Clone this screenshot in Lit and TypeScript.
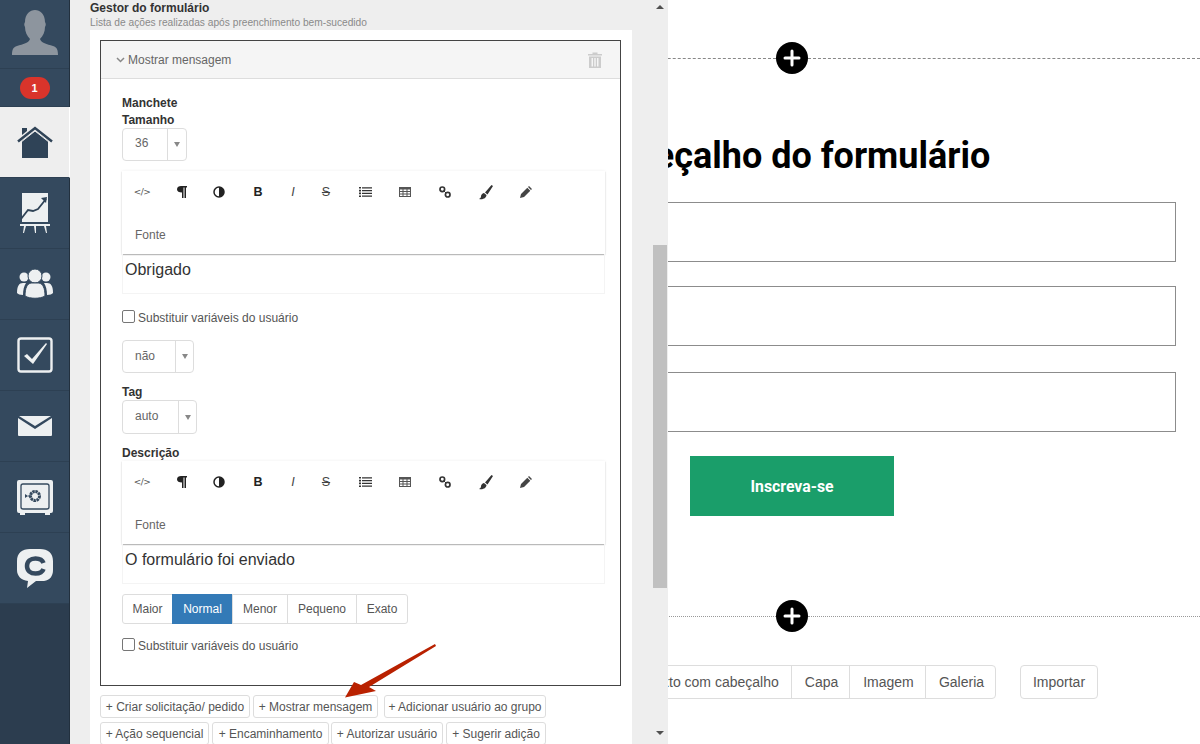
import { LitElement, html, css, svg } from "lit";
import { customElement } from "lit/decorators.js";

const sideIcons = {
  avatar: svg`<svg width="48" height="46" viewBox="0 0 48 46"><path fill="#8d959e" d="M1 46c0-5 1-8 5-9 6-2 12-3 13-7-3-3-5-7-5-12-1-2-1-3 0-5 0-8 5-12 10-12s10 4 10 12c1 2 1 3 0 5 0 5-2 9-5 12 1 4 7 5 13 7 4 1 5 4 5 9z"/></svg>`,
  home: svg`<svg width="36" height="33" viewBox="0 0 36 33"><path fill="#2f4357" d="M5 32V15L18 5l13 10v17z"/><path fill="none" stroke="#2f4357" stroke-width="2.500" d="M1 15.500 18 2l17 13.500"/><path fill="#2f4357" d="M5 2h5v3L5 9z"/><path fill="none" stroke="#eeeeee" stroke-width="1" d="M3.500 16.500 18 5l14.500 11.500"/></svg>`,
  chart: svg`<svg width="30" height="40" viewBox="0 0 30 40"><path fill="#edf0f1" d="M2 0h26v29H2z"/><path fill="none" stroke="#2f4357" stroke-width="1.800" d="M1 26 8 17l5 1 5-2 8-10"/><path fill="#2f4357" d="M21 5l6-1-1 6z"/><path fill="#edf0f1" d="M0 31h30v2H0zM4 33h2l-2 7H3zM14 33h2v7h-1zM24 33h2l1 7h-1z"/></svg>`,
  people: svg`<svg width="36" height="30" viewBox="0 0 36 30"><g fill="#edf0f1"><circle cx="7" cy="8" r="4.500"/><circle cx="29" cy="8" r="4.500"/><path d="M0 24c0-7 2-10 6-10h3c-2 3-3 7-3 12-3 0-5-1-6-2zM36 24c0-7-2-10-6-10h-3c2 3 3 7 3 12 3 0 5-1 6-2z"/><circle cx="18" cy="7" r="7" stroke="#34495e"/><path d="M8 27c0-8 2-12 6-13h8c4 1 6 5 6 13-5 3-15 3-20 0z" stroke="#34495e"/></g></svg>`,
  check: svg`<svg width="36" height="36" viewBox="0 0 36 36"><rect x="1.500" y="1.500" width="33" height="33" rx="2.500" fill="none" stroke="#edf0f1" stroke-width="2.400"/><path fill="#edf0f1" d="M7 19l3-2 5 5L29 6l1 1-14 20z"/></svg>`,
  mail: svg`<svg width="34" height="20" viewBox="0 0 34 20"><path fill="#edf0f1" d="M1 0h32L17 10zM0 2l17 11L34 2v17a1 1 0 0 1-1 1H1a1 1 0 0 1-1-1z"/></svg>`,
  safe: svg`<svg width="36" height="35" viewBox="0 0 36 35"><path fill="#edf0f1" d="M2 0h32a2 2 0 0 1 2 2v29a2 2 0 0 1-2 2h-1v2h-5v-2H8v2H3v-2H2a2 2 0 0 1-2-2V2a2 2 0 0 1 2-2z"/><rect x="4" y="4" width="28" height="25" rx="2" fill="none" stroke="#34495e" stroke-width="1.300"/><circle cx="18" cy="16" r="4.500" fill="none" stroke="#34495e" stroke-width="3" stroke-dasharray="2.400 .6"/><path fill="#34495e" d="M8 14v4l3-2zM11 15.500h3v1h-3z"/></svg>`,
  chat: svg`<svg width="36" height="39" viewBox="0 0 36 39"><path fill="#edf0f1" d="M13 0h10c8 0 13 4 13 12v9c0 6-3 10-9 11l-8 0-9 7 1-7C4 31 0 27 0 21v-9C0 4 5 0 13 0z"/><path fill="none" stroke="#34495e" stroke-width="4.500" d="M26.500 14c-1-3-4-4.500-8-4.500-5 0-8.500 3-8.500 7.500s3.500 7.500 8.500 7.500c4 0 7-1.500 8-4.500"/></svg>`,
};

const tools = [
  html`<span class="code">&lt;/&gt;</span>`,
  svg`<svg width="10" height="12" viewBox="0 0 10 12"><path fill="#222" d="M4 0h6v1.500H9V12H7.500V1.500H6.500V12H5V6.500C2 6.500 0 5.500 0 3.300 0 1 2 0 4 0z"/></svg>`,
  svg`<svg width="12" height="12" viewBox="0 0 12 12"><circle cx="6" cy="6" r="5" fill="#fff" stroke="#222" stroke-width="1.500"/><path fill="#222" d="M6 1a5 5 0 0 1 0 10z"/></svg>`,
  html`<b class="glyph">B</b>`,
  html`<i class="glyph thin">I</i>`,
  html`<s class="glyph thin">S</s>`,
  svg`<svg width="13" height="10" viewBox="0 0 13 10"><path fill="#333" d="M0 0h2v1.600H0zM3 .2h10v1.200H3zM0 2.800h2v1.600H0zM3 3h10v1.200H3zM0 5.600h2v1.600H0zM3 5.800h10V7H3zM0 8.400h2V10H0zM3 8.600h10v1.200H3z"/></svg>`,
  svg`<svg width="12" height="10" viewBox="0 0 12 10"><path fill="#555" fill-rule="evenodd" d="M0 0h12v10H0zM1 2.500v1.500h2.500V2.500zM4.500 2.500v1.500h3V2.500zM8.500 2.500v1.500H11V2.500zM1 5v1.500h2.500V5zM4.500 5v1.500h3V5zM8.500 5v1.500H11V5zM1 7.500V9h2.500V7.500zM4.500 7.500V9h3V7.500zM8.500 7.500V9H11V7.500z"/></svg>`,
  svg`<svg width="12" height="12" viewBox="0 0 12 12"><g fill="none" stroke="#333" stroke-width="1.700"><circle cx="3.300" cy="3.300" r="2.300"/><circle cx="8.700" cy="8.700" r="2.300"/></g><path stroke="#333" d="M5 5l2 2"/></svg>`,
  svg`<svg width="14" height="15" viewBox="0 0 14 15"><path fill="#333" d="M12.500 0l1.500 1-5.500 8.500-2.500-2zM5 8l2.500 2c0 2.500-3 5-7.500 4 2-1 2-2 2-3 0-1.500 2-3 3-3z"/></svg>`,
  svg`<svg width="12" height="12" viewBox="0 0 12 12"><path fill="#444" d="M9 0l3 3-1 1-3-3zM7.300 1.700l3 3L4 11l-4 1 1-4z"/></svg>`,
];

const toolbar = () => html`
  <div class="toolbar">
    <div class="tools">${tools.map((t) => html`<span class="tool">${t}</span>`)}</div>
    <div class="fonte">Fonte</div>
  </div>`;

const caret = html`<span class="caret"></span>`;

@customElement("app-root")
export class AppRoot extends LitElement {
  static styles = css`
    :host { display: block; width: 1200px; height: 744px; overflow: hidden; font-family: "Liberation Sans", Arial, sans-serif; color: #333; background: #fff; }
    .page { display: flex; height: 744px; }
    .side { width: 70px; flex: none; background: #2c3d4f; border-right: 1px solid #22303e; box-sizing: border-box; }
    .s-item { height: 71px; display: flex; align-items: center; justify-content: center; background: #34495e; border-bottom: 1px solid #2d4053; box-sizing: border-box; }
    .s-item.avatar { height: 69px; align-items: flex-end; padding-bottom: 13px; }
    .s-item.badge { height: 38px; }
    .s-item.active { background: #eeeeee; border-right: 1px solid #fff; margin-right: -1px; height: 71px; border-bottom: 1px solid #2d4053; }
    .pill { width: 30px; height: 22px; border-radius: 11px; background: #d9342b; color: #fff; font-size: 11px; font-weight: 700; display: flex; align-items: center; justify-content: center; }

    .panel { width: 598px; flex: none; background: #eeeeee; display: flex; position: relative; z-index: 2; height: 744px; overflow: hidden; }
    .content { width: 582px; flex: none; padding-left: 20px; box-sizing: border-box; }
    .title { font-size: 12px; font-weight: 700; line-height: 15px; color: #333; height: 15px; padding-top: 1px; margin-bottom: -1px; }
    .sub { font-size: 10.200px; line-height: 15px; color: #8a8a8a; height: 15px; }
    .sheet { background: #fff; width: 542px; padding: 10px 0 0 10px; box-sizing: border-box; height: 714px; }
    .box { width: 521px; height: 646px; border: 1px solid #444; box-sizing: border-box; }
    .box-head { height: 38px; background: #f5f5f5; border-bottom: 1px solid #ddd; box-sizing: border-box; display: flex; align-items: center; padding: 0 18px 0 15px; font-size: 12px; color: #666; gap: 3px; }
    .box-head .trash { margin-left: auto; }
    .box-body { padding: 16px 15px 0 21px; }
    .lbl { font-size: 12px; font-weight: 700; line-height: 16px; color: #333; }
    .lbl.tam { position: relative; top: 1px; }
    .select { display: flex; width: max-content; height: 33px; border: 1px solid #ddd; border-radius: 4px; box-sizing: border-box; font-size: 12px; color: #666; }
    .select .val { display: flex; align-items: center; padding-left: 12px; box-sizing: border-box; height: 30px; }
    .select .arr { border-left: 1px solid #ddd; display: flex; align-items: center; justify-content: center; flex: 1; }
    .caret { width: 0; height: 0; border-left: 3px solid transparent; border-right: 3px solid transparent; border-top: 5px solid #888; }
    .w36 .val { width: 44px; height: 28px; } .w36 { width: 65px; margin-top: 1px; }
    .wnao .val { width: 52px; } .wnao { width: 72px; margin-top: 13px; }
    .wauto .val { width: 55px; } .wauto { width: 75px; height: 34px; }
    .toolbar { width: 483px; height: 83px; background: #fff; box-shadow: 0 1px 1px rgba(0,0,0,.25), 0 0 3px rgba(0,0,0,.07); box-sizing: border-box; }
    .t1 { margin-top: 10px; }
    .tools { display: grid; grid-template-columns: 40px 40px 34px 44px 26px 40px 38px 42px 38px 44px 36px; height: 42px; }
    .tool { display: flex; align-items: center; justify-content: center; }
    .code { font-size: 9px; color: #555; font-family: "DejaVu Sans", sans-serif; letter-spacing: -.5px; }
    .glyph { font-size: 12.500px; color: #222; }
    .glyph.thin { color: #444; font-weight: 400; }
    .fonte { font-size: 12px; color: #666; padding: 15px 0 0 14px; line-height: 14px; margin-left: -1px; }
    .area { width: 483px; height: 40px; box-sizing: border-box; border: 1px solid #f4f4f4; border-top: 0; font-size: 16px; color: #333; padding: 6px 0 0 2px; line-height: 20px; }
    .check { display: flex; align-items: center; height: 18px; font-size: 12px; color: #555; gap: 3px; margin-top: 15px; }
    .check .cb { width: 13px; height: 13px; box-sizing: border-box; border: 1px solid #767676; border-radius: 2px; background: #fff; margin-top: -3px; }
    .tag { margin-top: 11px; position: relative; top: 0; }
    .desc { margin-top: 11px; }
    .group { display: flex; margin-top: 10px; width: max-content; }
    .group span { height: 30px; box-sizing: border-box; border: 1px solid #ddd; margin-left: -1px; display: flex; align-items: center; justify-content: center; font-size: 12px; color: #555; background: #fff; }
    .group span:first-child { margin-left: 0; border-radius: 3px 0 0 3px; width: 51px; }
    .group span:nth-child(2) { width: 61px; background: #337ab7; border-color: #337ab7; color: #fff; }
    .group span:nth-child(3) { width: 56px; }
    .group span:nth-child(4) { width: 70px; }
    .group span:nth-child(5) { width: 52px; border-radius: 0 3px 3px 0; }
    .check.c2 { margin-top: 13px; }
    .actions { margin-top: 9px; display: flex; flex-direction: column; gap: 4px; }
    .arow { display: flex; }
    .act { height: 23px; box-sizing: border-box; border: 1px solid #ddd; border-radius: 3px; font-size: 12px; color: #555; display: flex; align-items: center; justify-content: center; background: #fff; white-space: nowrap; flex: none; }

    .sbar { width: 16px; flex: none; display: flex; flex-direction: column; align-items: stretch; height: 744px; }
    .sup { height: 245px; display: flex; justify-content: center; padding-top: 5px; box-sizing: border-box; }
    .thumb { height: 343px; background: #c0c0c0; margin-left: 1px; width: 14px; }
    .sdn { flex: 1; display: flex; justify-content: center; align-items: flex-end; padding-bottom: 9px; }
    .up { width: 0; height: 0; border-left: 4px solid transparent; border-right: 4px solid transparent; border-bottom: 4px solid #505050; }
    .dn { width: 0; height: 0; border-left: 4px solid transparent; border-right: 4px solid transparent; border-top: 4px solid #505050; }

    .main { flex: 1; overflow: hidden; position: relative; }
    .inner { width: 793px; margin-left: -261px; padding-top: 42px; }
    .sep { display: grid; grid-template-columns: 369px 32px 1fr; align-items: center; height: 32px; }
    .sep .l { border-top: 1px dashed #888; }
    .sep.dot .l { border-top: 1px dotted #999; }
    .plus { width: 32px; height: 32px; border-radius: 50%; background: #000; display: flex; align-items: center; justify-content: center; }
    h1 { margin: 0; width: 768px; text-align: center; font-family: Roboto, sans-serif; font-size: 36px; font-weight: 700; line-height: 44px; color: #000; padding-top: 60px; white-space: nowrap; }
    .field { width: 769px; height: 60px; box-sizing: border-box; border: 1px solid #8c8c8c; }
    .f1 { margin-top: 24px; } .f2 { margin-top: 24px; } .f3 { margin-top: 26px; }
    .cta { margin: 24px 0 0 283px; width: 204px; height: 60px; background: #1a9e6a; color: #fff; font-family: Roboto, sans-serif; font-weight: 700; font-size: 15.800px; display: flex; align-items: center; justify-content: center; }
    .sep.s2 { margin-top: 84px; }
    .blocks { display: flex; justify-content: flex-end; padding-right: 102px; margin-top: 33px; gap: 24px; }
    .bgroup { display: flex; }
    .bgroup span, .imp { height: 34px; box-sizing: border-box; border: 1px solid #ddd; display: flex; align-items: center; justify-content: center; font-size: 14px; color: #555; margin-left: -1px; background: #fff; }
    .bgroup span { padding-left: 2px; }
    .bgroup span:first-child { width: 160px; }
    .bgroup span:nth-child(2) { width: 59px; }
    .bgroup span:nth-child(3) { width: 77px; }
    .bgroup span:nth-child(4) { width: 71px; border-radius: 0 4px 4px 0; }
    .imp { width: 78px; border-radius: 4px; margin-left: 0; }

    .arrow { position: absolute; left: 340px; top: 640px; z-index: 3; }
  `;

  private sep(cls: string) {
    return html`<div class="sep ${cls}"><div class="l"></div><div class="plus"><svg width="18" height="18" viewBox="0 0 18 18"><path stroke="#fff" stroke-width="3" stroke-linecap="round" d="M9 2v14M2 9h14"/></svg></div><div class="l"></div></div>`;
  }

  render() {
    const acts1: [string, number, number][] = [["+ Criar solicitação/ pedido", 150, 0], ["+ Mostrar mensagem", 125, 3], ["+ Adicionar usuário ao grupo", 162, 6]];
    const acts2: [string, number, number][] = [["+ Ação sequencial", 109, 0], ["+ Encaminhamento", 117, 3], ["+ Autorizar usuário", 112, 2], ["+ Sugerir adição", 100, 3]];
    const act = (a: [string, number, number]) => html`<span class="act" style="width:${a[1]}px;margin-left:${a[2]}px">${a[0]}</span>`;
    return html`
      <div class="page">
        <nav class="side">
          <div class="s-item avatar">${sideIcons.avatar}</div>
          <div class="s-item badge"><span class="pill">1</span></div>
          <div class="s-item active">${sideIcons.home}</div>
          <div class="s-item">${sideIcons.chart}</div>
          <div class="s-item">${sideIcons.people}</div>
          <div class="s-item">${sideIcons.check}</div>
          <div class="s-item">${sideIcons.mail}</div>
          <div class="s-item">${sideIcons.safe}</div>
          <div class="s-item">${sideIcons.chat}</div>
        </nav>
        <section class="panel">
          <div class="content">
            <div class="title">Gestor do formulário</div>
            <div class="sub">Lista de ações realizadas após preenchimento bem-sucedido</div>
            <div class="sheet">
              <div class="box">
                <div class="box-head">
                  <svg width="9" height="6" viewBox="0 0 9 6"><path fill="none" stroke="#888" stroke-width="1.500" d="M1 1l3.500 3.500L8 1"/></svg>
                  <span>Mostrar mensagem</span>
                  <svg class="trash" width="14" height="16" viewBox="0 0 14 16"><path fill="#ccc" fill-rule="evenodd" d="M0 2h4.500V.5h5V2H14v1.500H0zM1 4.500h12V16H1zM3.500 6v8.500H5V6zM6.300 6v8.500h1.400V6zM9 6v8.500h1.500V6z"/></svg>
                </div>
                <div class="box-body">
                  <div class="lbl">Manchete</div>
                  <div class="lbl tam">Tamanho</div>
                  <div class="select w36"><span class="val">36</span><span class="arr">${caret}</span></div>
                  <div class="t1">${toolbar()}</div>
                  <div class="area">Obrigado</div>
                  <label class="check"><span class="cb"></span>Substituir variáveis do usuário</label>
                  <div class="select wnao"><span class="val">não</span><span class="arr">${caret}</span></div>
                  <div class="lbl tag">Tag</div>
                  <div class="select wauto"><span class="val">auto</span><span class="arr">${caret}</span></div>
                  <div class="lbl desc">Descrição</div>
                  ${toolbar()}
                  <div class="area">O formulário foi enviado</div>
                  <div class="group"><span>Maior</span><span>Normal</span><span>Menor</span><span>Pequeno</span><span>Exato</span></div>
                  <label class="check c2"><span class="cb"></span>Substituir variáveis do usuário</label>
                </div>
              </div>
              <div class="actions">
                <div class="arow">${acts1.map(act)}</div>
                <div class="arow">${acts2.map(act)}</div>
              </div>
            </div>
          </div>
          <div class="sbar">
            <div class="sup"><span class="up"></span></div>
            <div class="thumb"></div>
            <div class="sdn"><span class="dn"></span></div>
          </div>
        </section>
        <main class="main">
          <div class="inner">
            ${this.sep("")}
            <h1>Cabeçalho do formulário</h1>
            <div class="field f1"></div>
            <div class="field f2"></div>
            <div class="field f3"></div>
            <div class="cta">Inscreva-se</div>
            ${this.sep("dot s2")}
            <div class="blocks">
              <div class="bgroup"><span>Texto com cabeçalho</span><span>Capa</span><span>Imagem</span><span>Galeria</span></div>
              <div class="imp">Importar</div>
            </div>
          </div>
        </main>
        <svg class="arrow" width="100" height="62" viewBox="0 0 100 62"><path fill="#b92100" d="M95 4 96 6 29 47 36 51 5 57.500 14 42 21 45z"/></svg>
      </div>
    `;
  }
}
